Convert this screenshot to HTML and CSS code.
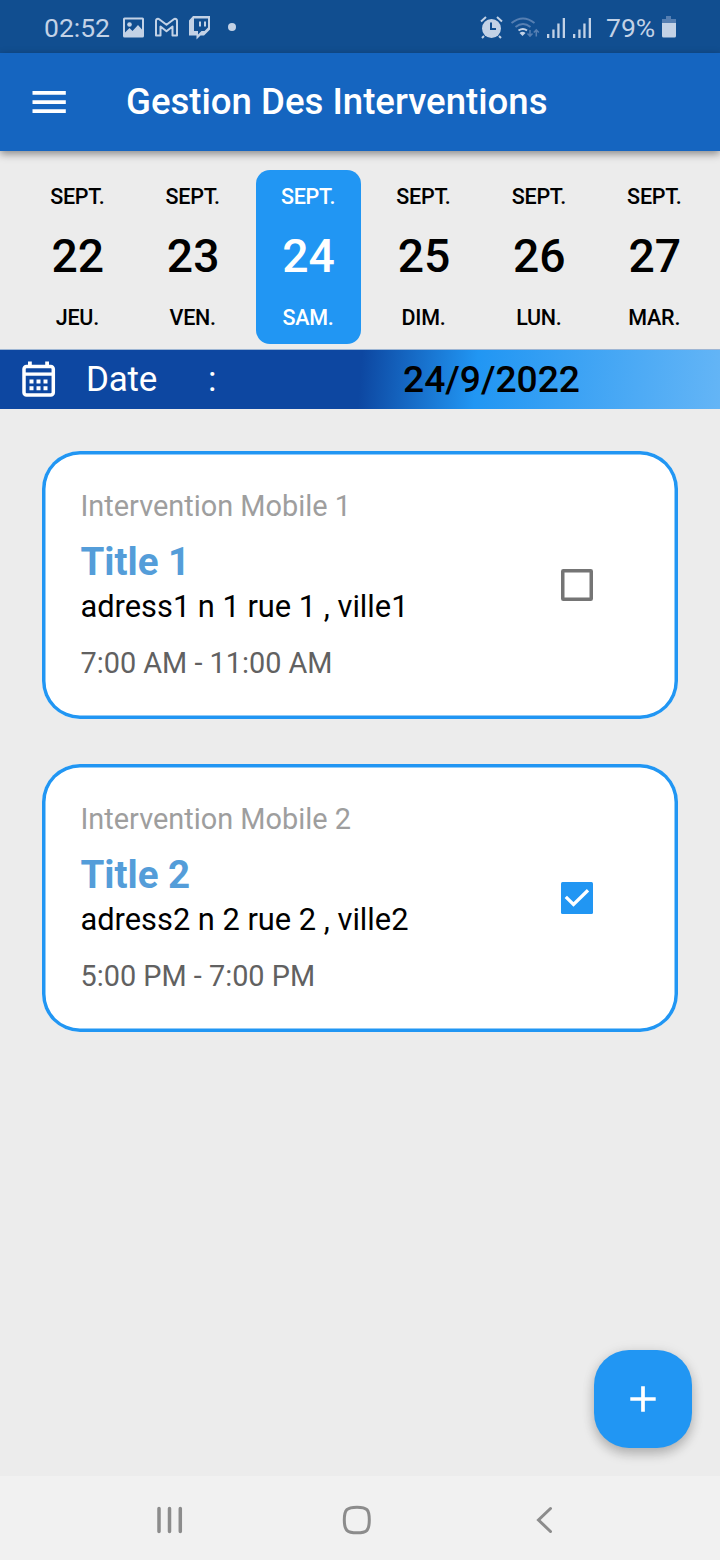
FILE: index.html
```
<!DOCTYPE html>
<html lang="fr">
<head>
<meta charset="utf-8">
<title>Gestion Des Interventions</title>
<link rel="stylesheet" href="styles.css">
</head>
<body>
<div class="screen">
  <div class="status">
    <span class="clock">02:52</span>
    <svg class="status-left" width="120" height="30" viewBox="120 12 120 30">
      <path fill="#c3d2e6" fill-rule="evenodd" d="M124.500 17.500h18a1.500 1.500 0 0 1 1.500 1.500v17a1.500 1.500 0 0 1-1.500 1.500h-18a1.500 1.500 0 0 1-1.500-1.500v-17a1.500 1.500 0 0 1 1.500-1.500zM125 19.500v13l4.500-4.500 3 3 5.500-6 4 4.500v-10z"/>
      <circle cx="129.500" cy="24.500" r="2.300" fill="#c3d2e6"/>
      <path fill="none" stroke="#c3d2e6" stroke-width="2" stroke-linejoin="round" d="M156 35.500V20.800a2 2 0 0 1 3.200-1.600l7.300 5.600 7.300-5.600a2 2 0 0 1 3.200 1.600v14.700h-4.500V26.500l-6 4.700-6-4.700v9z"/>
      <path fill="#c3d2e6" fill-rule="evenodd" d="M193 16h17v13.500l-6 6h-3.500l-4 4v-4H189V20.500zM194 18.500v12.500h4v3.500l3.500-3.500h3l3.500-3.500v-9zM199 21.500h2v5h-2zM204 21.500h2v5h-2z"/>
      <circle cx="232" cy="27" r="4" fill="#c3d2e6"/>
    </svg>
    <svg class="status-right" width="116" height="30" viewBox="478 12 116 30">
      <g fill="none" stroke="#c3d2e6" stroke-width="2"><path d="M481 21.500l5-4.500M502 21.500l-5-4.500M484 36l-2 2M499 36l2 2"/></g>
      <circle cx="491.500" cy="28.500" r="9.500" fill="#c3d2e6"/>
      <path d="M491 22.500v6.500h5" fill="none" stroke="#114e90" stroke-width="2"/>
      <g fill="none" stroke="#567fb2" stroke-width="2"><path d="M511.500 23q11.500-9 23 0M515.500 27q7.500-6 15 0"/><path stroke="#c3d2e6" d="M518.500 30.500q4.500-3 8.500 0"/><path stroke-width="1.500" d="M530 30v6m-2.500-2.500l2.500 2.700 2.500-2.700M536.300 36.500v-6.500m-2.500 2.500l2.500-2.700 2.500 2.700"/></g>
      <path fill="#c3d2e6" d="M519.500 33a4.500 4.500 0 0 1 6 0l-3 3z"/>
      <g fill="#c3d2e6"><path d="M547 34h2.300v4H547zM552.300 29.500h2.300V38h-2.300zM557.300 23.500h2.300V38h-2.300zM562.700 18h2.300v20h-2.300zM573 34h2.300v4H573zM578.300 29.500h2.300V38h-2.300zM583.300 23.500h2.300V38h-2.300zM588.700 18h2.300v20h-2.300z"/></g>
    </svg>
    <span class="percent">79%</span>
    <svg class="battery" width="16" height="24" viewBox="0 0 16 24"><path fill="#567fb2" d="M5 1h5v3h5v5H1V4h4z"/><path fill="#c3d2e6" d="M1 8h14v13a1.500 1.500 0 0 1-1.500 1.500h-11A1.500 1.500 0 0 1 1 21z"/></svg>
  </div>
  <header class="appbar">
    <svg class="menu" width="34" height="24" viewBox="0 0 34 24"><path fill="#fff" d="M.5 1h33.300v3.700H.5zM.5 10.200h33.300v3.700H.5zM.5 19.300h33.300V23H.5z"/></svg>
    <h1 class="title">Gestion Des Interventions</h1>
  </header>
  <div class="days">
    <div class="day"><span>SEPT.</span><b>22</b><span>JEU.</span></div>
    <div class="day"><span>SEPT.</span><b>23</b><span>VEN.</span></div>
    <div class="day selected"><span>SEPT.</span><b>24</b><span>SAM.</span></div>
    <div class="day"><span>SEPT.</span><b>25</b><span>DIM.</span></div>
    <div class="day"><span>SEPT.</span><b>26</b><span>LUN.</span></div>
    <div class="day"><span>SEPT.</span><b>27</b><span>MAR.</span></div>
  </div>
  <div class="datebar">
    <svg class="calendar" width="34" height="38" viewBox="0 0 34 38">
      <rect x="2" y="5.500" width="29.300" height="28.500" rx="2.500" fill="none" stroke="#fff" stroke-width="3.500"/>
      <path fill="none" stroke="#fff" stroke-width="3.300" d="M2.200 13.100h28.800"/>
      <path fill="#fff" d="M6 .5h3.800v5H6zM23.200 .5H27v5h-3.800zM7.500 18.500h4v4h-4zM14.500 18.500h4v4h-4zM21.500 18.500h4v4h-4zM7.500 25.300h4v4h-4zM14.500 25.300h4v4h-4zM21.500 25.300h4v4h-4z"/>
    </svg>
    <span class="label">Date</span><span class="colon">:</span><span class="value">24/9/2022</span>
  </div>
  <main class="list">
    <article class="card">
      <div class="info">
        <p class="kind">Intervention Mobile 1</p>
        <h2 class="name">Title 1</h2>
        <p class="address">adress1 n 1 rue 1 , ville1</p>
        <p class="time">7:00 AM - 11:00 AM</p>
      </div>
      <svg class="check" width="32" height="32" viewBox="0 0 32 32"><rect x="1.750" y="1.750" width="28.500" height="28.500" rx=".5" fill="none" stroke="#757575" stroke-width="3.500"/></svg>
    </article>
    <article class="card">
      <div class="info">
        <p class="kind">Intervention Mobile 2</p>
        <h2 class="name">Title 2</h2>
        <p class="address">adress2 n 2 rue 2 , ville2</p>
        <p class="time">5:00 PM - 7:00 PM</p>
      </div>
      <svg class="check" width="32" height="32" viewBox="0 0 32 32"><rect width="32" height="32" rx="1.500" fill="#2196f3"/><path d="M4.800 14.800l7.700 7.700L27 8.300" fill="none" stroke="#fff" stroke-width="3.300"/></svg>
    </article>
  </main>
  <nav class="nav">
    <svg width="26" height="28" viewBox="0 0 26 28"><path d="M2 2.500v23M12.500 2.500v23M23.300 2.500v23" stroke="#8c8c8c" stroke-width="3.500" stroke-linecap="round"/></svg>
    <svg class="home" width="30" height="30" viewBox="0 0 30 30"><path d="M15 2.200C25 2.200 27.300 4.500 27.300 15S25 27.800 15 27.800 2.300 25.500 2.300 15 5 2.200 15 2.200z" fill="none" stroke="#8c8c8c" stroke-width="3"/></svg>
    <svg width="18" height="28" viewBox="0 0 18 28"><path d="M15.500 2.500L3.500 14l12 11.500" fill="none" stroke="#8c8c8c" stroke-width="3" stroke-linecap="round"/></svg>
  </nav>
  <button class="fab" aria-label="Ajouter"><svg width="26" height="26" viewBox="0 0 26 26"><path d="M13 .3v25.400M.3 13h25.400" stroke="#fff" stroke-width="3.700"/></svg></button>
</div>
</body>
</html>
```
FILE: styles.css
```
* { box-sizing: border-box; }
body { margin: 0; font-family: Roboto, sans-serif; }
h1, h2, p { margin: 0; white-space: nowrap; }
svg { display: block; flex: none; }
.screen { position: relative; width: 720px; height: 1560px; background: #ececec; display: flex; flex-direction: column; overflow: hidden; }
.status { height: 53px; flex: none; background: #114e90; color: #c3d2e6; display: flex; align-items: center; padding: 2px 43px 0 44px; font-size: 26.500px; line-height: 32px; }
.status svg { margin-top: -1px; }
.clock { width: 76px; }
.status .status-right { margin-left: auto; }
.percent { width: 54px; margin-left: 12px; margin-right: 1px; }
.appbar { height: 98px; flex: none; background: #1565c0; display: flex; align-items: center; padding-left: 32px; gap: 60px; box-shadow: 0 3px 8px rgba(0, 0, 0, .42); z-index: 1; }
.title { color: #fff; font-size: 36.600px; font-weight: 500; line-height: 42px; }
.days { height: 198px; flex: none; display: flex; gap: 10.400px; padding: 19px 0 5px 25.300px; }
.day { width: 105px; height: 174px; flex: none; border-radius: 14px; display: flex; flex-direction: column; align-items: center; justify-content: space-between; padding: 14px 1px 13px 0; font-size: 21.500px; line-height: 26px; font-weight: 500; letter-spacing: -.25px; color: #000; }
.day b { font-size: 46.300px; line-height: 54px; font-weight: 500; letter-spacing: 0; margin: -4px -1px 0 0; }
.selected { background: #2196f3; color: #fff; }
.datebar { height: 60px; flex: none; display: flex; align-items: center; padding-left: 22px; border-top: 1px solid #9eb6d4; font-size: 35px; background: linear-gradient(94.700deg, #0d47a1 50%, #2196f3 66%, #64b5f6); color: #fff; }
.label { margin-left: 30px; width: 122px; letter-spacing: -.2px; }
.colon { width: 195px; }
.value { color: #000; font-size: 37.200px; font-weight: 500; padding-bottom: 2px; }
.list { flex: 1; padding: 42px 42px 0; display: flex; flex-direction: column; gap: 45.500px; }
.card { height: 267.500px; border-radius: 38px; box-shadow: inset 0 0 0 3.500px #2196f3; background: #fff; display: flex; justify-content: space-between; align-items: center; padding: 0 85px 0 38.500px; }
.info { display: flex; flex-direction: column; padding-bottom: 1px; }
.kind { font-size: 28.900px; line-height: 34px; color: #9e9e9e; }
.name { font-size: 38.500px; line-height: 46px; margin-top: 16px; color: #549dd9; font-weight: 700; }
.address { font-size: 30.800px; line-height: 34px; margin-top: 5px; color: #000; }
.time { font-size: 28.850px; line-height: 34px; margin-top: 22px; color: #616161; }
.nav { height: 84px; flex: none; background: #f1f1f1; display: flex; align-items: center; justify-content: space-between; padding: 3px 167px 0 157px; }
.home { margin-right: 5px; }
.fab { position: absolute; right: 28px; bottom: 112px; width: 98px; height: 98px; border: 0; border-radius: 35px; background: #2196f3; display: flex; align-items: center; justify-content: center; padding: 0; box-shadow: 0 6px 12px rgba(0, 0, 0, .22), 0 1px 14px rgba(0, 0, 0, .08); }
```
